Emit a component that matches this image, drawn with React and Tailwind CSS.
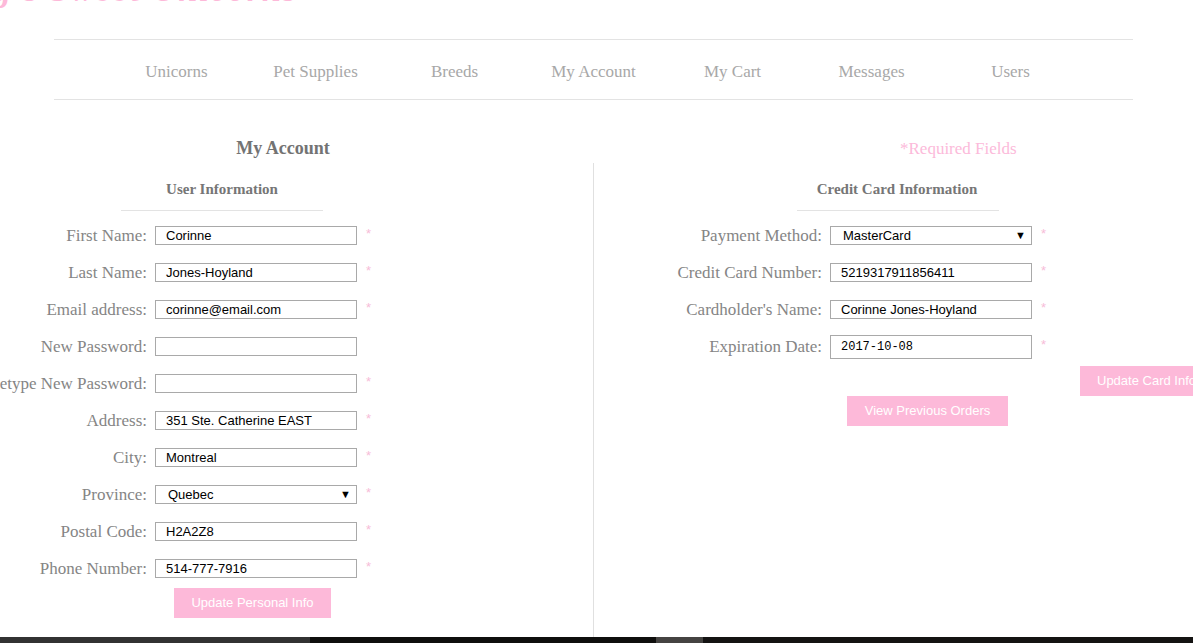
import React from "react";

const serif = { fontFamily: '"Liberation Serif", "Times New Roman", serif' };
const sans = { fontFamily: '"Liberation Sans", Arial, sans-serif' };
const mono = { fontFamily: '"Liberation Mono", "DejaVu Sans Mono", monospace' };

const navItems = ["Unicorns", "Pet Supplies", "Breeds", "My Account", "My Cart", "Messages", "Users"];

function Input({ value, select, mono: isMono, tall }) {
  return (
    <div
      className={
        "relative flex items-center w-[202px] border border-[#a9a9a9] bg-white text-black " +
        (tall ? "h-[24px] pl-[10px] text-[12px]" : "h-[19px] pl-[10px] text-[13px]")
      }
      style={isMono ? mono : sans}
    >
      <span className={select ? "pl-[2px]" : ""}>{value}</span>
      {select && (
        <span className="absolute right-[5px] top-0 text-[11px] leading-[17px]" style={sans}>▼</span>
      )}
    </div>
  );
}

function Row({ label, value, req, select, isMono, tall, labelClass }) {
  return (
    <div className="flex items-center h-[37px]">
      <div className={labelClass + " shrink-0 flex justify-end text-[17px] text-[#858585] whitespace-nowrap"} style={serif}>
        <span className="shrink-0">{label}</span>
      </div>
      <div className="ml-[8px]">
        <Input value={value} select={select} mono={isMono} tall={tall} />
      </div>
      {req && (
        <span className="ml-[9px] text-[13px] text-[#f7bcd8] -mt-[4px]" style={sans}>*</span>
      )}
    </div>
  );
}

function PinkButton({ children, className }) {
  return (
    <div
      className={"h-[30px] bg-[#fdb9d9] text-white text-[13px] flex items-center justify-center whitespace-nowrap " + className}
      style={sans}
    >
      {children}
    </div>
  );
}

export default function App() {
  const left = [
    ["First Name:", "Corinne", true],
    ["Last Name:", "Jones-Hoyland", true],
    ["Email address:", "corinne@email.com", true],
    ["New Password:", "", false],
    ["Retype New Password:", "", true],
    ["Address:", "351 Ste. Catherine EAST", true],
    ["City:", "Montreal", true],
    ["Province:", "Quebec", true, true],
    ["Postal Code:", "H2A2Z8", true],
    ["Phone Number:", "514-777-7916", true],
  ];
  return (
    <div className="w-[1193px] h-[643px] overflow-hidden bg-white flex flex-col">
      {/* logo (cut off) */}
      <div className="h-[39px] overflow-hidden shrink-0">
        <div
          className="-mt-[27px] -ml-[6px] text-[34px] leading-[34px] italic font-bold text-[#fdb9d9] whitespace-nowrap tracking-[2px]"
          style={serif}
        >
          g's Sweet Unicorns
        </div>
      </div>

      {/* nav */}
      <div className="mx-[54px] w-[1079px] h-[61px] pt-[5px] border-y border-[#e3e3e3] flex items-center justify-center shrink-0">
        {navItems.map((n) => (
          <div key={n} className="w-[139px] text-center text-[17px] text-[#a8a8a8]" style={serif}>
            {n}
          </div>
        ))}
      </div>

      {/* heading row */}
      <div className="flex items-center h-[24px] mt-[36px] shrink-0">
        <div className="w-[566px] text-center text-[18px] font-bold text-[#737373]" style={serif}>
          My Account
        </div>
        <div className="ml-[334px] text-[17px] text-[#fcbada] mt-[2px]" style={serif}>
          *Required Fields
        </div>
      </div>

      {/* columns */}
      <div className="flex flex-1 mt-[3px] min-h-0">
        <div className="w-[594px] border-r border-[#e0e0e0] shrink-0">
          <div className="w-[444px] text-center pt-[17px] text-[15px] font-bold text-[#767676] leading-[18px]" style={serif}>
            User Information
          </div>
          <div className="w-[202px] ml-[121px] mt-[12px] h-px bg-[#e3e3e3]" />
          <div className="mt-[6px]">
            {left.map(([l, v, r, s]) => (
              <Row key={l} label={l} value={v} req={r} select={s} labelClass="w-[147px]" />
            ))}
          </div>
          <PinkButton className="ml-[174px] w-[157px] mt-[1px]">Update Personal Info</PinkButton>
        </div>

        <div className="flex-1">
          <div className="w-[606px] text-center pt-[17px] text-[15px] font-bold text-[#767676] leading-[18px]" style={serif}>
            Credit Card Information
          </div>
          <div className="w-[202px] ml-[203px] mt-[12px] h-px bg-[#e3e3e3]" />
          <div className="mt-[6px]">
            <Row label="Payment Method:" value="MasterCard" req select labelClass="w-[228px]" />
            <Row label="Credit Card Number:" value="5219317911856411" req labelClass="w-[228px]" />
            <Row label="Cardholder's Name:" value="Corinne Jones-Hoyland" req labelClass="w-[228px]" />
            <Row label="Expiration Date:" value="2017-10-08" req isMono tall labelClass="w-[228px]" />
          </div>
          <div className="flex">
            <PinkButton className="ml-[486px] w-[140px] mt-[1px] justify-start pl-[17px]">Update Card Info</PinkButton>
          </div>
          <PinkButton className="ml-[253px] w-[161px]">View Previous Orders</PinkButton>
        </div>
      </div>

      {/* bottom bar */}
      <div className="flex h-[6px] shrink-0">
        <div className="w-[310px] bg-[#323232]" />
        <div className="w-[346px] bg-[#0f0e0d]" />
        <div className="w-[47px] bg-[#454341]" />
        <div className="flex-1 bg-[#141312]" />
      </div>
    </div>
  );
}
